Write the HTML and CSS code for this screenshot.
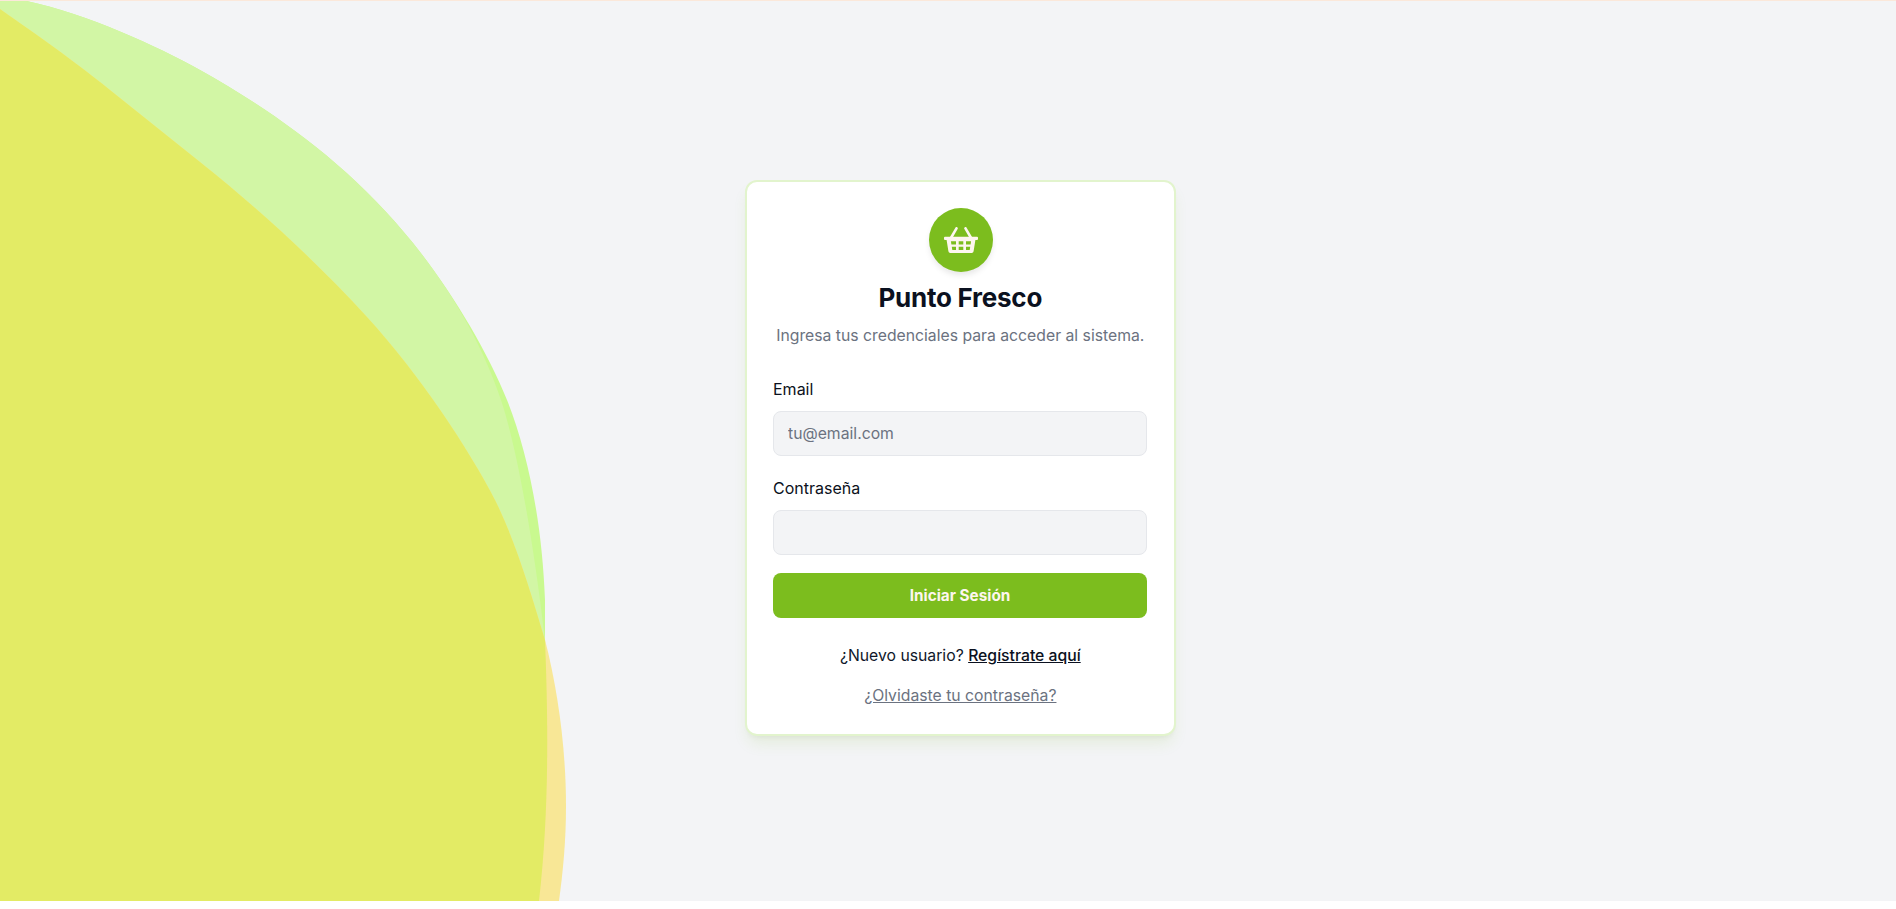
FILE: index.html
```html
<!DOCTYPE html>
<html lang="es">
<head>
  <meta charset="UTF-8" />
  <meta name="viewport" content="width=device-width, initial-scale=1.0" />
  <title>Punto Fresco</title>
  <link rel="stylesheet" href="styles.css">
</head>
<body>
  <div class="top-line"></div>
  <main class="page">
    <svg class="blobs" viewBox="0 0 600 900" width="600" height="900" aria-hidden="true">
      <path class="blob-green" d="M0 -1 L22 -1 C85 12 155 44 200 69 C270 108 350 163 413 242 C450 288 487 349 507 399 C527 449 542 519 545 599 L545 639 C549 740 548 820 539 900 L0 900 Z"/>
      <path class="blob-light" d="M0 -1 L22 -1 C85 12 155 44 200 69 C270 108 350 163 413 242 C450 288 482 342 501 399 C516 444 532 529 545 639 L0 639 Z"/>
      <path class="blob-orange" d="M0 8 C40 36 70 57 110 89 C140 113 170 137 200 161 C255 205 310 254 367 316 C420 374 468 447 495 499 C515 539 530 589 545 639 C558 689 566 749 566 805 C566 840 563 870 559 900 L0 900 Z"/>
      <path class="blob-mix" d="M0 8 C40 36 70 57 110 89 C140 113 170 137 200 161 C255 205 310 254 367 316 C420 374 468 447 495 499 C515 539 530 589 545 639 C549 740 548 820 539 900 L0 900 Z"/>
    </svg>

    <section class="login-card">
      <div class="logo-circle">
        <svg class="logo-icon" viewBox="0 0 34 27" width="34" height="27" aria-hidden="true">
          <path d="M12.500 1.300 L7.200 10.500 M21.500 1.300 L26.800 10.500" fill="none" stroke="currentColor" stroke-width="2.600" stroke-linecap="round"/>
          <path fill="currentColor" fill-rule="evenodd" d="M1 9.700H33a1 1 0 0 1 1 1V12a1 1 0 0 1-1 1H31.400L29.600 24.200a2 2 0 0 1-2 1.800H6.400a2 2 0 0 1-2-1.800L2.600 13H1a1 1 0 0 1-1-1V10.700a1 1 0 0 1 1-1z M6.900 14.200L7.400 17.400H12V14.200z M14.700 14.200V17.400H19.300V14.200z M22 14.200V17.400H26.600L27.100 14.200z M7.800 19.700L8.300 23H12V19.700z M14.700 19.700V23H19.300V19.700z M22 19.700V23H25.700L26.200 19.700z"/>
        </svg>
      </div>
      <h1 class="brand">Punto Fresco</h1>
      <p class="subtitle">Ingresa tus credenciales para acceder al sistema.</p>

      <form class="login-form">
        <label class="field-label" for="email">Email</label>
        <input class="field-input" id="email" type="email" placeholder="tu@email.com" />
        <label class="field-label" for="password">Contraseña</label>
        <input class="field-input" id="password" type="password" />
        <button class="submit-btn" type="submit">Iniciar Sesión</button>
      </form>

      <p class="register-line">¿Nuevo usuario? <a class="register-link" href="#">Regístrate aquí</a></p>
      <p class="forgot-line"><a class="forgot-link" href="#">¿Olvidaste tu contraseña?</a></p>
    </section>
  </main>
</body>
</html>
```

FILE: styles.css
```css
* { box-sizing: border-box; }
html, body { margin: 0; background: #fff; }
body { font-family: Inter, "Liberation Sans", sans-serif; color: #0f172a; }
.top-line { height: 1px; background: #fbe8da; }
.page { position: relative; height: 900px; overflow: hidden; background: #f3f4f6; display: flex; justify-content: center; align-items: flex-start; padding: 179px 0 0 24.6px; }
.blobs { position: absolute; top: 0; left: 0; }
.blob-green { fill: #c9f98f; }
.blob-light { fill: #d2f6a5; }
.blob-orange { fill: #f8e796; }
.blob-mix { fill: #e3eb65; }

.login-card { position: relative; width: 430.6px; height: 556px; background: #fff; border: 2px solid #e2f4cd; border-radius: 12px; padding: 26px; display: flex; flex-direction: column; align-items: center; box-shadow: 0 10px 15px -3px rgba(124,189,30,0.12), 0 4px 6px -4px rgba(0,0,0,0.08); }
.logo-circle { width: 64px; height: 64px; margin-left: 1px; border-radius: 50%; background: #7cbd1e; display: flex; align-items: center; justify-content: center; box-shadow: 0 4px 6px -1px rgba(0,0,0,0.1); flex-shrink: 0; }
.logo-icon { color: #fdf6ee; }
.brand { margin: 8px 0 0; font-size: 26px; line-height: 36px; font-weight: 700; letter-spacing: -0.25px; color: #0b1120; }
.subtitle { margin: 8px 0 0; font-size: 15.75px; line-height: 24px; color: #6b7280; }

.login-form { width: 374px; align-self: flex-start; display: flex; flex-direction: column; margin-top: 27px; }
.field-label { margin: 2px 0 10px; font-size: 16px; line-height: 24px; font-weight: 400; color: #0b1120; }
.field-input { height: 45px; margin: 0 0 18px; padding: 0 14px; font: 15.75px Inter, sans-serif; background: #f3f4f6; border: 1px solid #e5e7eb; border-radius: 8px; color: #0f172a; }
.field-input::placeholder { color: #6b7280; opacity: 1; }
.submit-btn { height: 45px; border: 0; border-radius: 8px; background: #7cbd1e; color: #fdf6ee; font: 700 15.3px Inter, sans-serif; }

.register-line { margin: 26px 0 0; font-size: 15.75px; line-height: 24px; }
.register-link { color: #0b1120; font-weight: 500; }
.forgot-line { margin: 16px 0 0; font-size: 15.75px; line-height: 24px; }
.forgot-link { color: #6b7280; }
```
